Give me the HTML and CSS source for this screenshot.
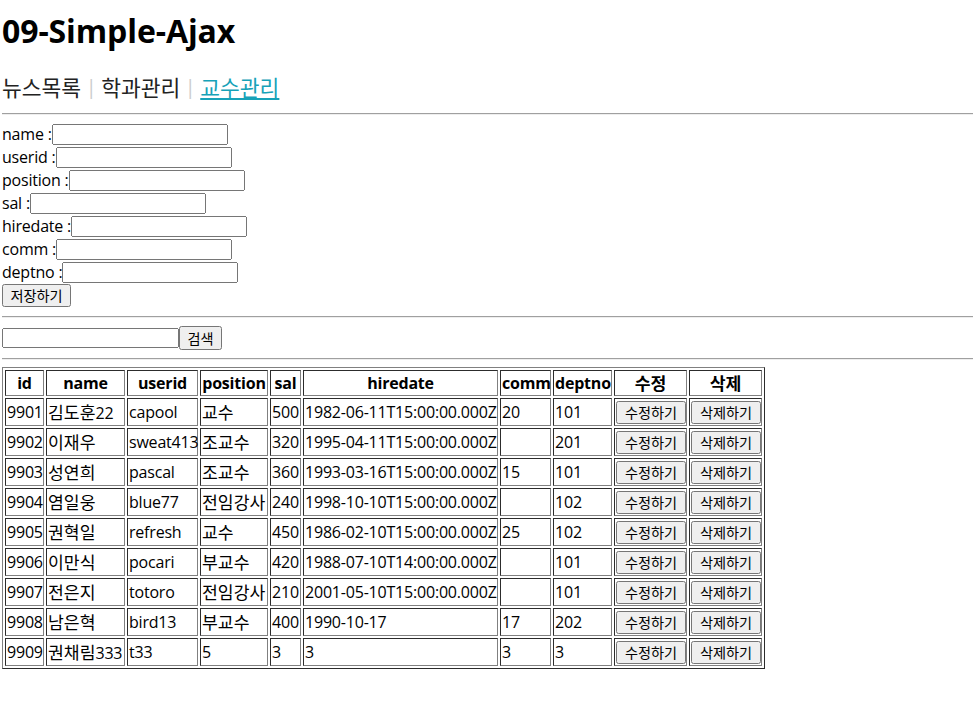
FILE: index.html
```html
<!DOCTYPE html>
<html lang="ko">
<head>
<meta charset="utf-8">
<title>09-Simple-Ajax</title>
<link rel="stylesheet" href="styles.css">
</head>
<body>
<h1 class="title">09-Simple-Ajax</h1>
<nav class="nav">
  <a class="nav-item">뉴스목록</a><span class="sep">|</span><a class="nav-item">학과관리</a><span class="sep">|</span><a class="nav-item active" href="#">교수관리</a>
</nav>
<hr class="rule rule-top">
<form class="form">
  <div class="row"><span class="lbl">name :</span><input class="field" type="text"></div>
  <div class="row"><span class="lbl">userid :</span><input class="field" type="text"></div>
  <div class="row"><span class="lbl">position :</span><input class="field" type="text"></div>
  <div class="row"><span class="lbl">sal :</span><input class="field" type="text"></div>
  <div class="row"><span class="lbl">hiredate :</span><input class="field" type="text"></div>
  <div class="row"><span class="lbl">comm :</span><input class="field" type="text"></div>
  <div class="row"><span class="lbl">deptno :</span><input class="field" type="text"></div>
  <button class="btn btn-save" type="button">저장하기</button>
</form>
<hr class="rule rule-mid">
<div class="search"><input class="field search-field" type="text"><button class="btn btn-search" type="button">검색</button></div>
<hr class="rule rule-bot">
<table class="tbl">
  <thead>
    <tr class="head">
      <th class="c-id">id</th><th class="c-name">name</th><th class="c-user">userid</th><th class="c-pos">position</th><th class="c-sal">sal</th><th class="c-date">hiredate</th><th class="c-comm">comm</th><th class="c-dept">deptno</th><th class="c-edit"><span class="ko">수정</span></th><th class="c-del"><span class="ko">삭제</span></th>
    </tr>
  </thead>
  <tbody>
    <tr><td>9901</td><td><span class="ko">김도훈</span>22</td><td>capool</td><td><span class="ko">교수</span></td><td>500</td><td>1982-06-11T15:00:00.000Z</td><td>20</td><td>101</td><td><button class="btn btn-cell" type="button">수정하기</button></td><td><button class="btn btn-cell" type="button">삭제하기</button></td></tr>
    <tr><td>9902</td><td><span class="ko">이재우</span></td><td>sweat413</td><td><span class="ko">조교수</span></td><td>320</td><td>1995-04-11T15:00:00.000Z</td><td></td><td>201</td><td><button class="btn btn-cell" type="button">수정하기</button></td><td><button class="btn btn-cell" type="button">삭제하기</button></td></tr>
    <tr><td>9903</td><td><span class="ko">성연희</span></td><td>pascal</td><td><span class="ko">조교수</span></td><td>360</td><td>1993-03-16T15:00:00.000Z</td><td>15</td><td>101</td><td><button class="btn btn-cell" type="button">수정하기</button></td><td><button class="btn btn-cell" type="button">삭제하기</button></td></tr>
    <tr><td>9904</td><td><span class="ko">염일웅</span></td><td>blue77</td><td><span class="ko">전임강사</span></td><td>240</td><td>1998-10-10T15:00:00.000Z</td><td></td><td>102</td><td><button class="btn btn-cell" type="button">수정하기</button></td><td><button class="btn btn-cell" type="button">삭제하기</button></td></tr>
    <tr><td>9905</td><td><span class="ko">권혁일</span></td><td>refresh</td><td><span class="ko">교수</span></td><td>450</td><td>1986-02-10T15:00:00.000Z</td><td>25</td><td>102</td><td><button class="btn btn-cell" type="button">수정하기</button></td><td><button class="btn btn-cell" type="button">삭제하기</button></td></tr>
    <tr><td>9906</td><td><span class="ko">이만식</span></td><td>pocari</td><td><span class="ko">부교수</span></td><td>420</td><td>1988-07-10T14:00:00.000Z</td><td></td><td>101</td><td><button class="btn btn-cell" type="button">수정하기</button></td><td><button class="btn btn-cell" type="button">삭제하기</button></td></tr>
    <tr><td>9907</td><td><span class="ko">전은지</span></td><td>totoro</td><td><span class="ko">전임강사</span></td><td>210</td><td>2001-05-10T15:00:00.000Z</td><td></td><td>101</td><td><button class="btn btn-cell" type="button">수정하기</button></td><td><button class="btn btn-cell" type="button">삭제하기</button></td></tr>
    <tr><td>9908</td><td><span class="ko">남은혁</span></td><td>bird13</td><td><span class="ko">부교수</span></td><td>400</td><td>1990-10-17</td><td>17</td><td>202</td><td><button class="btn btn-cell" type="button">수정하기</button></td><td><button class="btn btn-cell" type="button">삭제하기</button></td></tr>
    <tr><td>9909</td><td><span class="ko">권채림</span>333</td><td>t33</td><td>5</td><td>3</td><td>3</td><td>3</td><td>3</td><td><button class="btn btn-cell" type="button">수정하기</button></td><td><button class="btn btn-cell" type="button">삭제하기</button></td></tr>
  </tbody>
</table>
</body>
</html>
```
FILE: styles.css
```css
html, body {
  background: #fff;
}
body {
  margin: 0 4px 0 2px;
  font-family: "Open Sans", "Noto Sans CJK KR", sans-serif;
  font-size: 16px;
  letter-spacing: -0.2px;
  color: #000;
}
.ko {
  font-family: "Noto Sans CJK KR", sans-serif;
  font-size: 1.075em;
  letter-spacing: 0;
}
.title {
  margin: 11px 0 0;
  font-size: 32px;
  line-height: 40px;
  font-weight: 700;
  letter-spacing: -0.1px;
}
.nav {
  display: flex;
  margin-top: 21px;
  font-family: "Noto Sans CJK KR", sans-serif;
  font-size: 21.5px;
  line-height: 30px;
  letter-spacing: 0;
}
.nav-item {
  color: #222;
  text-decoration: none;
}
.nav-item.active {
  color: #17a2b8;
  text-decoration: underline;
  text-underline-offset: 2px;
}
.sep {
  display: inline-block;
  width: 20px;
  text-align: center;
  color: #ccc;
  font-family: "Open Sans", sans-serif;
  font-size: 20px;
}
.rule {
  border: 0;
  border-top: 1px solid #a0a0a0;
  border-bottom: 1px solid #eeeeee;
  height: 0;
}
.rule-top { margin: 11px 0 8px; }
.rule-mid { margin: 9px 0 8px; }
.rule-bot { margin: 8px 0 7px; }
.form {
  display: flex;
  flex-direction: column;
  align-items: flex-start;
}
.row {
  display: flex;
  align-items: center;
  height: 23px;
  line-height: 21px;
}
.field {
  box-sizing: border-box;
  width: 176px;
  height: 21px;
  margin: 0;
  padding: 1px 2px;
  font-family: "Open Sans", "Noto Sans CJK KR", sans-serif;
  font-size: 13.333px;
}
.btn {
  box-sizing: border-box;
  height: 23px;
  margin: 0;
  padding: 1px 6px;
  font-family: "Noto Sans CJK KR", sans-serif;
  font-size: 14.2px;
  line-height: 17px;
  letter-spacing: 0;
  color: #000;
}
.btn-save {
  width: 69px;
}
.search {
  display: flex;
  align-items: center;
  height: 24px;
}
.search-field {
  width: 177px;
  height: 20px;
}
.btn-search {
  width: 43px;
  height: 24px;
}
.tbl {
  table-layout: fixed;
  width: 763px;
  border: 1px outset gray;
  border-spacing: 2px;
  border-collapse: separate;
}
.tbl th,
.tbl td {
  border: 1px inset gray;
  padding: 1px;
  white-space: nowrap;
  vertical-align: middle;
}
.tbl th {
  font-weight: 700;
  text-align: center;
  line-height: 20px;
}
.tbl td {
  text-align: left;
  line-height: 20px;
}
.tbl .head { height: 26px; }
.tbl tbody tr { height: 28px; }
.c-id { width: 35px; }
.c-name { width: 75px; }
.c-user { width: 67px; }
.c-pos { width: 64px; }
.c-sal { width: 27px; }
.c-date { width: 191px; }
.c-comm { width: 47px; }
.c-dept { width: 55px; }
.c-edit { width: 69px; }
.c-del { width: 69px; }
.btn-cell {
  width: 70px;
  height: 23px;
  vertical-align: middle;
}
```
